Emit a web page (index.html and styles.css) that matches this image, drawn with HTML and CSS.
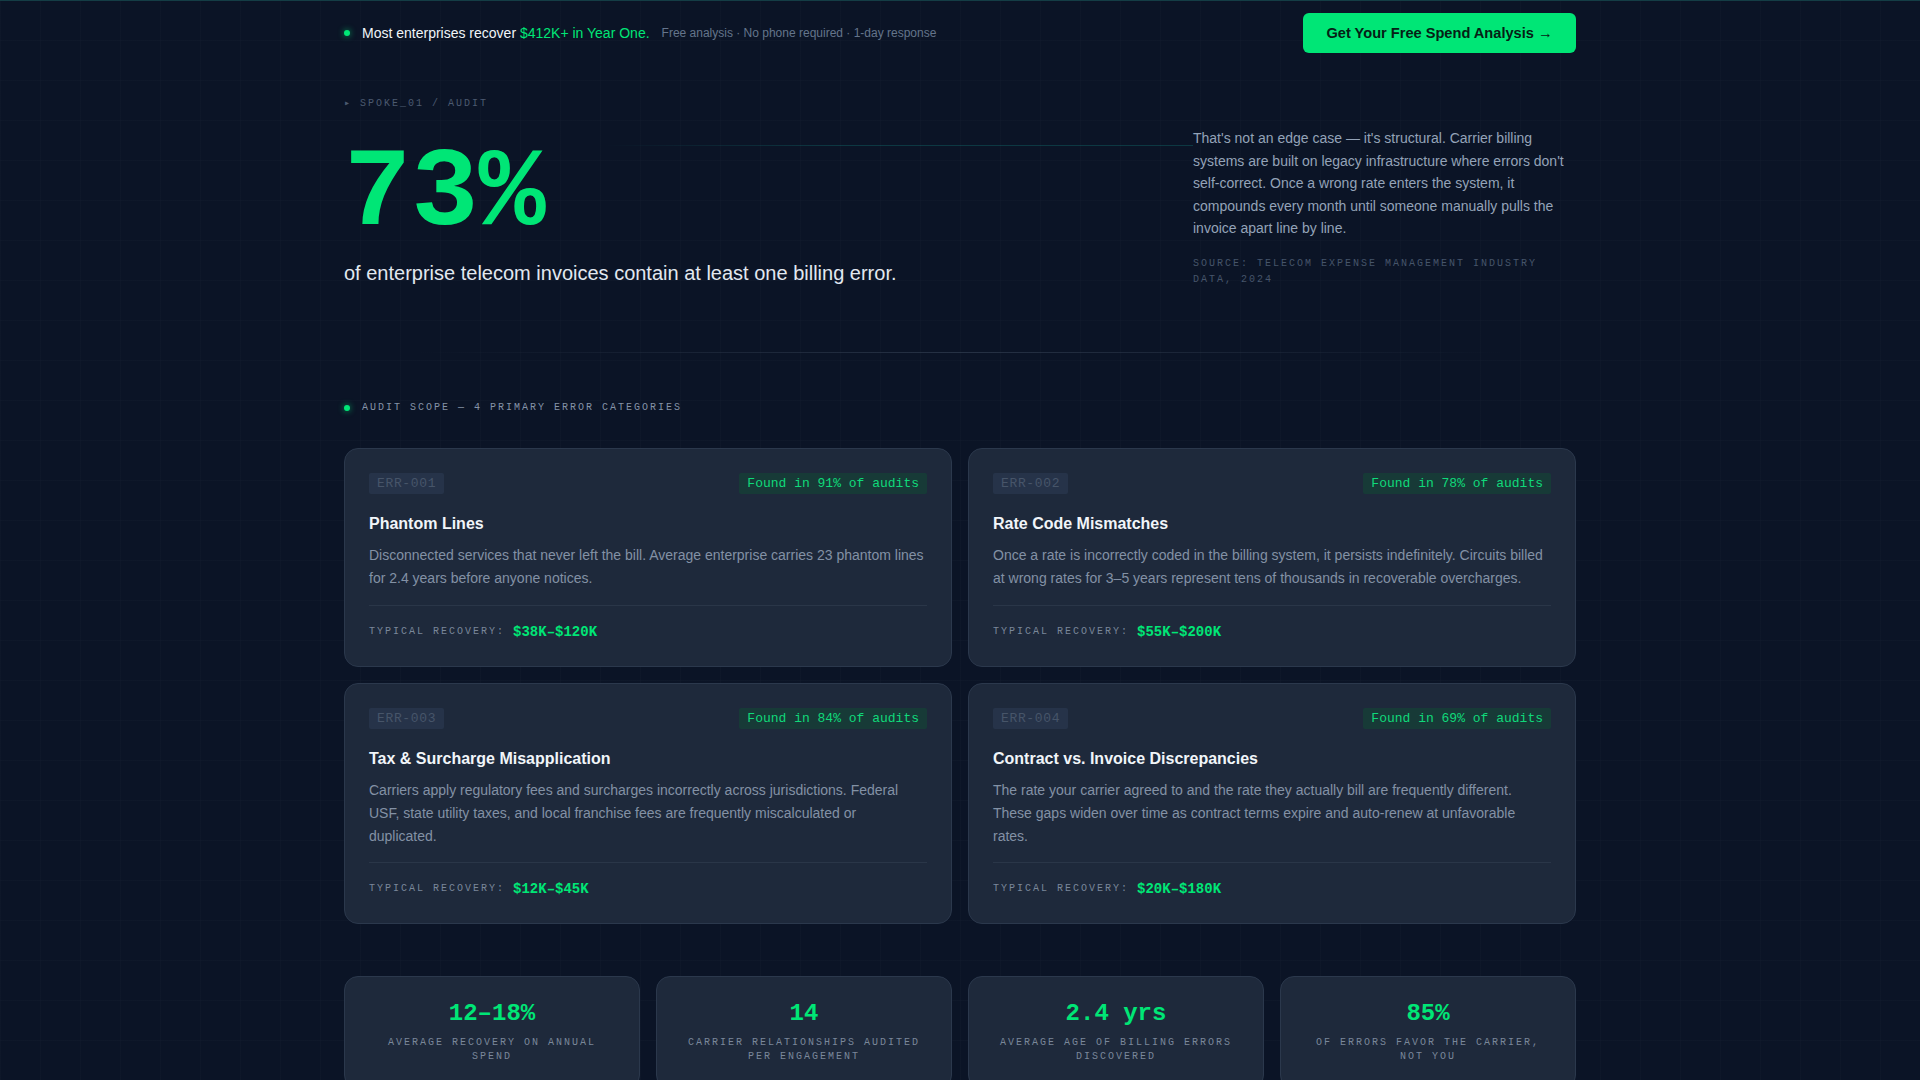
FILE: index.html
```html
<!DOCTYPE html>
<html lang="en">
<head>
    <meta charset="UTF-8">
    <meta name="viewport" content="width=device-width, initial-scale=1.0">
    <title>Spoke 01 - Telecom Billing Audit</title>
    <link rel="stylesheet" href="styles.css">
</head>
<body>
    <div class="topbar">
        <div class="container topbar-inner">
            <div class="topbar-msg">
                <span class="dot"></span>
                <span class="topbar-lead">Most enterprises recover <span class="accent">$412K+ in Year One.</span></span>
                <span class="topbar-note">Free analysis · No phone required · 1-day response</span>
            </div>
            <a href="#" class="cta">Get Your Free Spend Analysis →</a>
        </div>
    </div>

    <main class="container">
        <section class="hero">
            <div class="crumb">▸ SPOKE_01 / AUDIT</div>
            <div class="hero-grid">
                <div class="hero-main">
                    <div class="big-stat">73%</div>
                    <p class="hero-sub">of enterprise telecom invoices contain at least one billing error.</p>
                </div>
                <aside class="hero-aside">
                    <p>That's not an edge case — it's structural. Carrier billing systems are built on legacy infrastructure where errors don't self-correct. Once a wrong rate enters the system, it compounds every month until someone manually pulls the invoice apart line by line.</p>
                    <p class="source">Source: Telecom Expense Management Industry Data, 2024</p>
                </aside>
            </div>
        </section>

        <div class="divider"></div>

        <section class="scope">
            <div class="section-label"><span class="dot"></span>Audit scope — 4 primary error categories</div>
            <div class="cards" id="cards"></div>
        </section>

        <section class="stats" id="stats"></section>
    </main>

    <script>
        const errors = [
            {
                code: "ERR-001",
                found: 91,
                title: "Phantom Lines",
                text: "Disconnected services that never left the bill. Average enterprise carries 23 phantom lines for 2.4 years before anyone notices.",
                recovery: "$38K–$120K"
            },
            {
                code: "ERR-002",
                found: 78,
                title: "Rate Code Mismatches",
                text: "Once a rate is incorrectly coded in the billing system, it persists indefinitely. Circuits billed at wrong rates for 3–5 years represent tens of thousands in recoverable overcharges.",
                recovery: "$55K–$200K"
            },
            {
                code: "ERR-003",
                found: 84,
                title: "Tax & Surcharge Misapplication",
                text: "Carriers apply regulatory fees and surcharges incorrectly across jurisdictions. Federal USF, state utility taxes, and local franchise fees are frequently miscalculated or duplicated.",
                recovery: "$12K–$45K"
            },
            {
                code: "ERR-004",
                found: 69,
                title: "Contract vs. Invoice Discrepancies",
                text: "The rate your carrier agreed to and the rate they actually bill are frequently different. These gaps widen over time as contract terms expire and auto-renew at unfavorable rates.",
                recovery: "$20K–$180K"
            }
        ];

        const stats = [
            { value: "12–18%", label: "Average recovery on annual spend" },
            { value: "14", label: "Carrier relationships audited per engagement" },
            { value: "2.4 yrs", label: "Average age of billing errors discovered" },
            { value: "85%", label: "Of errors favor the carrier, not you" }
        ];

        const cards = document.getElementById('cards');
        errors.forEach(err => {
            const card = document.createElement('article');
            card.className = 'card';
            card.innerHTML = `
                <div class="card-head">
                    <span class="code">${err.code}</span>
                    <span class="found">Found in ${err.found}% of audits</span>
                </div>
                <h3>${err.title.replace('&', '&amp;')}</h3>
                <p class="card-text">${err.text}</p>
                <div class="card-foot">
                    <span class="foot-label">Typical recovery:</span>
                    <span class="foot-value">${err.recovery}</span>
                </div>
            `;
            cards.appendChild(card);
        });

        const statRow = document.getElementById('stats');
        stats.forEach(s => {
            const box = document.createElement('div');
            box.className = 'stat';
            box.innerHTML = `
                <div class="stat-value">${s.value}</div>
                <div class="stat-label">${s.label}</div>
            `;
            statRow.appendChild(box);
        });
    </script>
</body>
</html>
```

FILE: styles.css
```css
* {
    margin: 0;
    padding: 0;
    box-sizing: border-box;
}
body {
    font-family: "Liberation Sans", Arial, sans-serif;
    color: #e2e8f0;
    background-color: #0b1426;
    background-image:
        linear-gradient(rgba(148, 163, 184, 0.025) 1px, transparent 1px),
        linear-gradient(90deg, rgba(148, 163, 184, 0.025) 1px, transparent 1px);
    background-size: 40px 40px;
    border-top: 1px solid #143d45;
    min-height: 100vh;
}
.container {
    max-width: 1232px;
    margin: 0 auto;
}
.big-stat, .crumb, .source, .section-label, .code, .found,
.foot-label, .foot-value, .stat-value, .stat-label {
    font-family: "Liberation Mono", "DejaVu Sans Mono", monospace;
}
.dot {
    width: 6px;
    height: 6px;
    border-radius: 50%;
    background: #00e676;
    box-shadow: 0 0 6px rgba(0, 230, 118, 0.7);
    flex-shrink: 0;
}

/* top strip */
.topbar {
    padding: 12px 0;
}
.topbar-inner {
    display: flex;
    align-items: center;
    justify-content: space-between;
}
.topbar-msg {
    display: flex;
    align-items: center;
    gap: 10px;
}
.topbar-msg .dot {
    margin-right: 2px;
}
.topbar-lead {
    font-size: 14px;
    color: #f1f5f9;
}
.accent {
    color: #00e676;
}
.topbar-note {
    font-size: 12px;
    color: #64748b;
    margin-left: 2px;
}
.cta {
    display: inline-block;
    width: 273px;
    padding: 12px 0;
    background: #00e676;
    color: #062015;
    font-weight: bold;
    font-size: 14.6px;
    text-align: center;
    text-decoration: none;
    border-radius: 6px;
}

/* hero */
.hero {
    padding-top: 31px;
}
.crumb {
    font-size: 10px;
    line-height: 16px;
    letter-spacing: 0.2em;
    color: #4b5a70;
    margin-bottom: 15px;
}
.hero-grid {
    display: grid;
    grid-template-columns: 1fr 383px;
    gap: 48px;
}
.hero-main {
    position: relative;
}
/* thin rule running from the headline figure over to the side note */
.hero-main::after {
    content: "";
    position: absolute;
    top: 18px;
    left: 260px;
    right: -48px;
    height: 1px;
    background: linear-gradient(90deg, transparent, rgba(20, 184, 166, 0.22) 40%, rgba(20, 184, 166, 0.22));
}
.big-stat {
    font-size: 112px;
    line-height: 1;
    font-weight: bold;
    color: #00e676;
    margin-top: 12px;
}
.hero-sub {
    font-size: 20px;
    line-height: 28px;
    color: #e2e8f0;
    margin-top: 8px;
}
.hero-aside p {
    font-size: 14px;
    line-height: 22.6px;
    color: #94a3b8;
}
.hero-aside .source {
    font-size: 10px;
    line-height: 16px;
    letter-spacing: 0.2em;
    text-transform: uppercase;
    color: #46546a;
    margin-top: 16px;
}
.divider {
    height: 1px;
    margin: 64px 0 47px;
    background: linear-gradient(90deg, transparent 6%, rgba(71, 85, 105, 0.45) 50%, transparent 94%);
}

/* error categories */
.section-label {
    display: flex;
    align-items: center;
    gap: 12px;
    font-size: 10px;
    line-height: 16px;
    letter-spacing: 0.2em;
    text-transform: uppercase;
    color: #8593a7;
}
.cards {
    display: grid;
    grid-template-columns: 1fr 1fr;
    gap: 16px;
    margin-top: 32px;
}
.card {
    background: #1e293b;
    border: 1px solid #2b384c;
    border-radius: 14px;
    padding: 24px;
    display: flex;
    flex-direction: column;
}
.card-head {
    display: flex;
    justify-content: space-between;
    align-items: center;
}
.code {
    font-size: 13px;
    line-height: 15px;
    letter-spacing: 0.05em;
    color: #475569;
    background: #263349;
    padding: 3px 8px;
    border-radius: 2px;
}
.found {
    font-size: 13px;
    line-height: 15px;
    color: #10d97a;
    background: #173a37;
    padding: 3px 8px;
    border-radius: 2px;
}
.card h3 {
    font-size: 16px;
    line-height: 21px;
    color: #f1f5f9;
    margin-top: 19px;
}
.card-text {
    font-size: 14px;
    line-height: 23.3px;
    color: #8391a5;
    margin: 10px 0 14px;
}
.card-foot {
    margin-top: auto;
    padding-top: 16px;
    border-top: 1px solid #2a3648;
    display: flex;
    align-items: center;
    gap: 8px;
    line-height: 20px;
}
.foot-label {
    font-size: 10px;
    letter-spacing: 0.2em;
    text-transform: uppercase;
    color: #7a879a;
}
.foot-value {
    font-size: 14px;
    font-weight: bold;
    color: #00e676;
}

/* key numbers */
.stats {
    display: grid;
    grid-template-columns: repeat(4, 1fr);
    gap: 16px;
    margin-top: 52px;
}
.stat {
    background: #1e293b;
    border: 1px solid #2b384c;
    border-radius: 14px;
    padding: 22px 24px 24px;
    text-align: center;
}
.stat-value {
    font-size: 24px;
    line-height: 29px;
    font-weight: bold;
    color: #00e676;
}
.stat-label {
    font-size: 10px;
    line-height: 14px;
    letter-spacing: 0.2em;
    text-transform: uppercase;
    color: #7a879a;
    margin-top: 8px;
}
```
